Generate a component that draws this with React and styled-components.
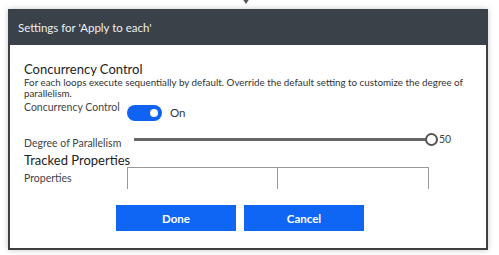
import styled, { createGlobalStyle } from "styled-components";

const GlobalStyle = createGlobalStyle`
  body {
    margin: 0;
    background: #ffffff;
    font-family: Lato, "Open Sans", sans-serif;
  }
`;

const Page = styled.div`
  position: relative;
  width: 499px;
  height: 255px;
  padding: 9px 0 0 8px;
  box-sizing: border-box;
`;

// little caret of the anchor element peeking over the dialog
const Caret = styled.div`
  position: absolute;
  left: 242px;
  top: -2px;
  width: 0;
  height: 0;
  border-left: 4px solid transparent;
  border-right: 4px solid transparent;
  border-top: 6px solid #555;
`;

const Dialog = styled.section`
  width: 480px;
  height: 241px;
  box-sizing: border-box;
  background: #fff;
  border: 2px solid #3f3f3f;
  border-top: none;
  box-shadow: 0 0 6px rgba(0, 0, 0, 0.22);
  display: flex;
  flex-direction: column;
`;

const Header = styled.header`
  height: 36px;
  margin: 0 -2px;
  background: #3b4149;
  color: #eef0f2;
  font-size: 11.5px;
  display: flex;
  align-items: center;
  padding-left: 10px;
`;

const Body = styled.div`
  padding: 16px 0 0 14px;
  display: flex;
  flex-direction: column;
  color: #333;
`;

const SectionTitle = styled.h2`
  margin: 0;
  font-size: 13px;
  font-weight: 400;
  line-height: ${(p) => p.$lh || 16}px;
  color: #222;
`;

const Description = styled.p`
  margin: 0;
  font-size: 9.8px;
  line-height: 11px;
  color: #333;
  width: 462px;
`;

const Row = styled.div`
  display: flex;
  align-items: flex-start;
  height: ${(p) => p.$h}px;
`;

const Label = styled.span`
  width: ${(p) => p.$w || 103}px;
  flex-shrink: 0;
  font-size: 10.5px;
  line-height: 13px;
  color: #444;
  margin-top: ${(p) => p.$mt || 0}px;
`;

const Toggle = styled.span`
  width: 35px;
  height: 16px;
  margin-top: 6px;
  border-radius: 8px;
  background: #0f62f2;
  position: relative;
  flex-shrink: 0;

  &::after {
    content: "";
    position: absolute;
    right: 4px;
    top: 4px;
    width: 8px;
    height: 8px;
    border-radius: 50%;
    background: #fff;
  }
`;

const ToggleText = styled.span`
  margin: 7px 0 0 8px;
  font-size: 11.5px;
  line-height: 14px;
  color: #333;
`;

const Track = styled.div`
  margin-top: 13px;
  width: 298px;
  height: 3px;
  background: #666;
  position: relative;
`;

const Thumb = styled.span`
  position: absolute;
  right: -6px;
  top: -5px;
  width: 9px;
  height: 9px;
  border-radius: 50%;
  border: 2px solid #555;
  background: #fff;
`;

const SliderValue = styled.span`
  margin: 8px 0 0 7px;
  font-size: 10.5px;
  line-height: 13px;
  color: #444;
`;

const PropBox = styled.div`
  width: 151px;
  height: 22px;
  box-sizing: border-box;
  border: 1px solid #999;
  border-bottom: none;
  & + & {
    border-left: none;
  }
`;

const Footer = styled.div`
  display: flex;
  gap: 8px;
  margin-top: 16px;
  padding-left: 92px;
`;

const Button = styled.button`
  width: 120px;
  height: 26px;
  border: none;
  background: #0f66f5;
  color: #fff;
  font-family: Lato, "Open Sans", sans-serif;
  font-weight: 700;
  font-size: 11.5px;
  padding: 0;
`;

export default function App() {
  return (
    <>
      <GlobalStyle />
      <Page>
        <Caret />
        <Dialog>
          <Header>Settings for 'Apply to each'</Header>
          <Body>
            <SectionTitle>Concurrency Control</SectionTitle>
            <Description>
              For each loops execute sequentially by default. Override the
              default setting to customize the degree of parallelism.
            </Description>
            <Row $h={26}>
              <Label $mt={2}>Concurrency Control</Label>
              <Toggle />
              <ToggleText>On</ToggleText>
            </Row>
            <Row $h={28}>
              <Label $w={110} $mt={12}>Degree of Parallelism</Label>
              <Track>
                <Thumb />
              </Track>
              <SliderValue>50</SliderValue>
            </Row>
            <SectionTitle $lh={14}>Tracked Properties</SectionTitle>
            <Row $h={22}>
              <Label $mt={5}>Properties</Label>
              <PropBox />
              <PropBox />
            </Row>
            <Footer>
              <Button>Done</Button>
              <Button>Cancel</Button>
            </Footer>
          </Body>
        </Dialog>
      </Page>
    </>
  );
}
